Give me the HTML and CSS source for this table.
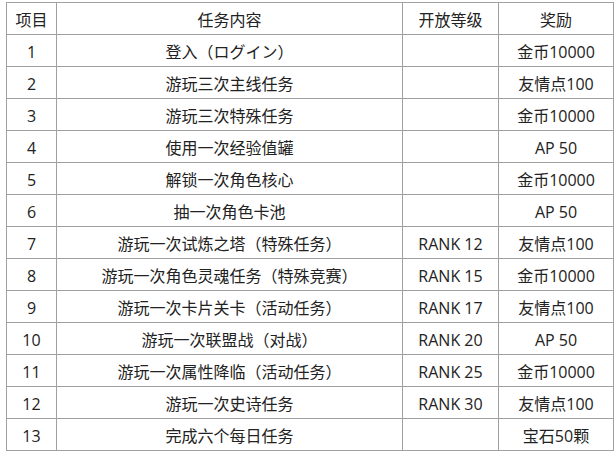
FILE: index.html
```html
<!DOCTYPE html>
<html lang="zh-CN">
<head>
<meta charset="utf-8">
<link rel="stylesheet" href="styles.css">
</head>
<body>
<table class="tasks">
  <colgroup>
    <col class="c-no"><col class="c-task"><col class="c-level"><col class="c-reward">
  </colgroup>
  <thead>
    <tr><th>项目</th><th>任务内容</th><th>开放等级</th><th>奖励</th></tr>
  </thead>
  <tbody>
    <tr><td>1</td><td>登入（ログイン）</td><td></td><td>金币10000</td></tr>
    <tr><td>2</td><td>游玩三次主线任务</td><td></td><td>友情点100</td></tr>
    <tr><td>3</td><td>游玩三次特殊任务</td><td></td><td>金币10000</td></tr>
    <tr><td>4</td><td>使用一次经验值罐</td><td></td><td>AP 50</td></tr>
    <tr><td>5</td><td>解锁一次角色核心</td><td></td><td>金币10000</td></tr>
    <tr><td>6</td><td>抽一次角色卡池</td><td></td><td>AP 50</td></tr>
    <tr><td>7</td><td>游玩一次试炼之塔（特殊任务）</td><td>RANK 12</td><td>友情点100</td></tr>
    <tr><td>8</td><td>游玩一次角色灵魂任务（特殊竞赛）</td><td>RANK 15</td><td>金币10000</td></tr>
    <tr><td>9</td><td>游玩一次卡片关卡（活动任务）</td><td>RANK 17</td><td>友情点100</td></tr>
    <tr><td>10</td><td>游玩一次联盟战（对战）</td><td>RANK 20</td><td>AP 50</td></tr>
    <tr><td>11</td><td>游玩一次属性降临（活动任务）</td><td>RANK 25</td><td>金币10000</td></tr>
    <tr><td>12</td><td>游玩一次史诗任务</td><td>RANK 30</td><td>友情点100</td></tr>
    <tr><td>13</td><td>完成六个每日任务</td><td></td><td>宝石50颗</td></tr>
  </tbody>
</table>
</body>
</html>
```
FILE: styles.css
```css
html, body {
  margin: 0;
  padding: 0;
  background: #ffffff;
}
body {
  padding: 2px 0 0 6px;
  font-family: "Open Sans", "Noto Sans CJK SC", sans-serif;
  font-size: 16px;
  color: #222222;
  text-spacing-trim: space-all;
}
.tasks {
  border-collapse: collapse;
  table-layout: fixed;
  width: 607px;
}
.c-no { width: 50px; }
.c-task { width: 346px; }
.c-level { width: 96px; }
.c-reward { width: 115px; }
.tasks th,
.tasks td {
  border: 1px solid #a0a0a0;
  height: 32px;
  padding: 3px 0 0 0;
  box-sizing: border-box;
  text-align: center;
  vertical-align: middle;
  font-weight: normal;
  line-height: 20px;
  white-space: nowrap;
}
```
